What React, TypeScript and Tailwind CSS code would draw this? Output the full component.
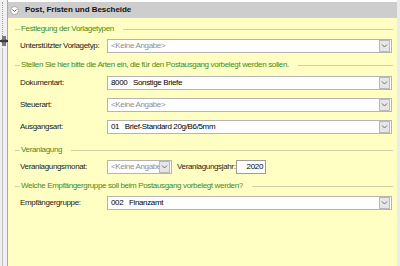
import React from 'react';

const gruen = 'text-[#3f8a24]';

function Gruppe({ titel, className = '' }: { titel: string; className?: string }) {
  return (
    <div className={`flex items-center h-[10px] ${className}`}>
      <div className="w-[5px] h-px bg-[#d3d0a6]" />
      <span className={`ml-px whitespace-nowrap ${gruen}`}>{titel}</span>
      <div className="flex-1 h-px bg-[#d3d0a6] ml-[9px]" />
    </div>
  );
}

function Pfeil() {
  return (
    <div className="w-[11px] h-[12px] my-auto mr-px bg-[#e6e6e6] border border-[#b9b9b9] flex items-center justify-center shrink-0">
      <svg width="7" height="4" viewBox="0 0 7 4">
        <path d="M1 0.5 L3.5 3 L6 0.5" fill="none" stroke="#6d6d6d" strokeWidth="1" />
      </svg>
    </div>
  );
}

function Auswahl({ wert, leer = false, className = 'flex-1' }: { wert: string; leer?: boolean; className?: string }) {
  return (
    <div className={`h-[14px] bg-white border border-[#b4b4b4] flex overflow-hidden ${className}`}>
      <span className={`flex-1 min-w-0 pl-[3px] leading-[12px] whitespace-pre overflow-hidden ${leer ? 'text-[#8e8e8e]' : 'text-black'}`}>
        {wert}
      </span>
      <Pfeil />
    </div>
  );
}

function Zeile({ label, wert, leer, className = '' }: { label: string; wert: string; leer?: boolean; className?: string }) {
  return (
    <div className={`flex items-center pl-[5px] pr-px ${className}`}>
      <span className="w-[87px] text-[#1a1a1a] whitespace-nowrap">{label}</span>
      <Auswahl wert={wert} leer={leer} />
    </div>
  );
}

export default function App() {
  return (
    <div className="w-[400px] h-[266px] flex bg-[#f0f0f0] text-[8px] tracking-[-0.35px] font-['Liberation_Sans',Arial,sans-serif] overflow-hidden">
      {/* Splitter links */}
      <div className="relative w-[8px] shrink-0 border-r border-[#a8a8a8]">
        <div className="absolute left-[2px] top-[2px] h-[34px] border-l border-dotted border-[#9a9a9a]" />
        <div className="absolute left-[2px] top-[48px] bottom-0 border-l border-[#bdbdbd]" />
        <svg className="absolute left-0 top-[36px]" width="9" height="10" viewBox="0 0 9 10">
          <path d="M3 0 V10 M5 0 V10" stroke="#000" strokeWidth="1" />
          <path d="M0 5 H8" stroke="#000" strokeWidth="1" />
          <path d="M0.5 5 L2 3.5 M0.5 5 L2 6.5 M7.5 5 L6 3.5 M7.5 5 L6 6.5" stroke="#000" strokeWidth="1" />
        </svg>
      </div>

      <div className="flex-1 flex flex-col border-r-[3px] border-[#ececec]">
        {/* Kopfzeile */}
        <div className="h-[18px] pt-[2px] bg-white">
          <div className="h-[16px] bg-[#cdcdcd] flex items-center pl-[2px]">
            <div className="w-[9px] h-[9px] rounded-full bg-white border border-[#a9a9a9] flex items-center justify-center">
              <svg width="5" height="3" viewBox="0 0 5 3">
                <path d="M0.5 0.5 L2.5 2.5 L4.5 0.5" fill="none" stroke="#555" strokeWidth="1" />
              </svg>
            </div>
            <span className="ml-[6px] font-bold text-[8px] tracking-[-0.05px] text-[#111]">Post, Fristen und Bescheide</span>
          </div>
        </div>

        {/* Inhalt */}
        <div className="flex-1 bg-[#ffffc3] pl-[7px] pr-[4px] pt-[6px]">
          <Gruppe titel="Festlegung der Vorlagetypen" />
          <Zeile className="mt-[5px]" label="Unterstützter Vorlagetyp:" wert="<Keine Angabe>" leer />

          <Gruppe className="mt-[7px]" titel="Stellen Sie hier bitte die Arten ein, die für den Postausgang vorbelegt werden sollen." />
          <div className="mt-[6px] flex flex-col gap-[8px]">
            <Zeile label="Dokumentart:" wert="8000   Sonstige Briefe" />
            <Zeile label="Steuerart:" wert="<Keine Angabe>" leer />
            <Zeile label="Ausgangsart:" wert="01   Brief-Standard 20g/B6/5mm" />
          </div>

          <Gruppe className="mt-[11px]" titel="Veranlagung" />
          <div className="mt-[5px] flex items-center pl-[5px]">
            <span className="w-[87px] text-[#1a1a1a] whitespace-nowrap">Veranlagungsmonat:</span>
            <Auswahl wert="<Keine Angabe>" leer className="w-[65px] shrink-0" />
            <span className="ml-[5px] w-[59px] text-[#1a1a1a] whitespace-nowrap">Veranlagungsjahr:</span>
            <div className="w-[30px] h-[14px] bg-white border border-[#9c9c9c] text-right pr-[2px] leading-[12px] text-black">2020</div>
          </div>

          <Gruppe className="mt-[7px]" titel="Welche Empfängergruppe soll beim Postausgang vorbelegt werden?" />
          <Zeile className="mt-[5px]" label="Empfängergruppe:" wert="002   Finanzamt" />
        </div>
      </div>
    </div>
  );
}
